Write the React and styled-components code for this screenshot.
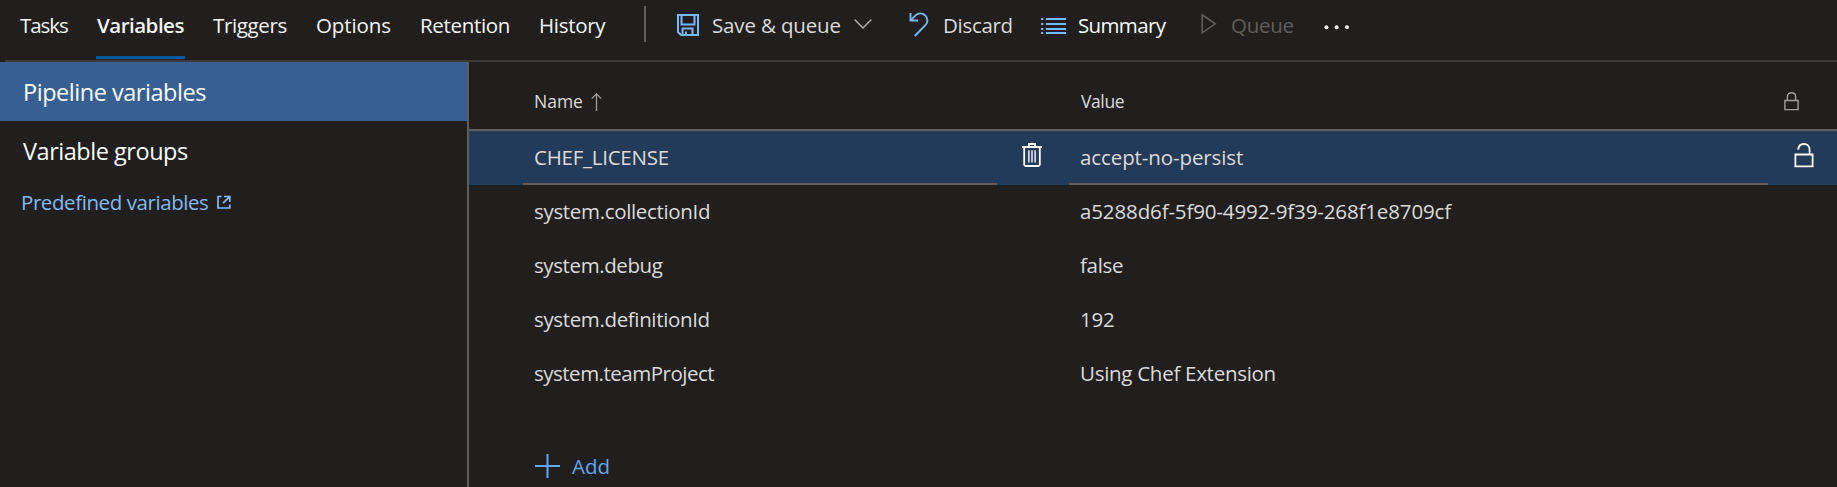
import React from "react";
import styled, { createGlobalStyle, css } from "styled-components";

const color = {
  bg: "#201f1e",
  divider: "#3b3a39",
  border: "#605e5c",
  selected: "#385f92",
  rowActive: "#233a58",
  text: "#dddbd9",
  bright: "#faf9f8",
  muted: "#605e5c",
  icon: "#79b8ff",
  link: "#82baf8",
  action: "#62a7fb",
};

const GlobalStyle = createGlobalStyle`
  *, *::before, *::after { box-sizing: border-box; }
  body {
    margin: 0;
    background: ${color.bg};
    color: ${color.text};
    font-family: "Open Sans", "Noto Sans", sans-serif;
    font-size: 20.5px;
    overflow: hidden;
  }
  svg { display: block; flex: none; }
`;

const Page = styled.div`
  display: flex;
  flex-direction: column;
  width: 100%;
  height: 487px;
  overflow: hidden;
`;

const Toolbar = styled.header`
  display: flex;
  flex: none;
  align-items: flex-start;
  height: 62px;
  margin-left: 5px;
  padding-left: 15px;
  border-bottom: 2px solid ${color.divider};
`;

const Label = styled.span`
  white-space: nowrap;
  letter-spacing: ${(p) => p.$track || 0}px;
`;

const TabList = styled.nav`
  display: flex;
  gap: 28px;
`;

const Tab = styled.div`
  width: ${(p) => p.$width}px;
  height: 59px;
  padding-left: ${(p) => p.$pad || 0}px;
  line-height: 50px;
  color: ${color.bright};
  border-bottom: 3px solid transparent;
  ${(p) =>
    p.$active &&
    css`
      font-weight: 600;
      border-color: #005a9e;
    `}
`;

const Separator = styled.div`
  width: 2px;
  height: 36px;
  margin: 6px 31px 0 38px;
  background: ${color.border};
`;

const Command = styled.div`
  display: flex;
  align-items: center;
  height: 50px;
  width: ${(p) => p.$width}px;
  gap: ${(p) => p.$gap}px;
  color: ${(p) => p.$color || color.text};
`;

const Body = styled.div`
  display: flex;
  flex: 1;
  min-height: 0;
`;

const Sidebar = styled.aside`
  width: 469px;
  flex: none;
  border-right: 2px solid ${color.border};
`;

const SideItem = styled.div`
  height: 59px;
  padding-left: 23px;
  line-height: 60px;
  font-size: 23.5px;
  color: #fff;
  background: ${(p) => (p.$active ? color.selected : "transparent")};
`;

const SideLink = styled.a`
  display: flex;
  align-items: center;
  gap: 9px;
  height: 44px;
  padding-left: 21px;
  color: ${color.link};
`;

const Main = styled.main`
  flex: 1;
  min-width: 0;
`;

const grid = css`
  display: grid;
  grid-template-columns: 474px 72px 699px 1fr;
  padding-left: 54px;
`;

const HeadRow = styled.div`
  ${grid}
  height: 69px;
  padding-top: 12px;
  font-size: 17.5px;
  line-height: 55px;
  border-bottom: 2px solid ${color.border};
`;

const Row = styled.div`
  ${grid}
  height: 54px;
  background: ${(p) => (p.$active ? color.rowActive : "transparent")};
`;

const Cell = styled.div`
  padding-left: 11px;
  line-height: 52px;
  border-bottom: 2px solid ${(p) => (p.$active ? color.border : "transparent")};
`;

const HeadCell = styled.div`
  display: flex;
  padding-left: ${(p) => p.$pad}px;
`;

const IconCell = styled.div`
  padding: ${(p) => p.$top}px 0 0 ${(p) => p.$left}px;
`;

const SortIcon = styled.div`
  padding: 19px 0 0 8px;
`;

const AddButton = styled.div`
  display: flex;
  align-items: center;
  gap: 12px;
  height: 54px;
  margin: 38px 0 0 66px;
  color: ${color.action};
`;

const SaveIcon = () => (
  <svg width="22" height="22" viewBox="0 0 22 22" fill="none" stroke={color.icon} strokeWidth="2">
    <path d="M1 1H21V21H4L1 18Z" />
    <path d="M4.5 1V10.5H17.5V1" />
    <path d="M5.5 21V14.5H15.5V21M9 21V17.5" />
  </svg>
);

const ChevronIcon = () => (
  <svg width="18" height="18" viewBox="0 0 18 18" fill="none" stroke="#b3afab" strokeWidth="1.4">
    <path d="M.6 3.5L9 12L17.4 3.5" />
  </svg>
);

const UndoIcon = () => (
  <svg width="20" height="26" viewBox="0 0 20 26" fill="none" stroke={color.icon} strokeWidth="1.9">
    <path d="M1.5 1V8.5H9" />
    <path d="M1.8 8.2L6.5 3.4C9.5 .8 13.5 .8 16.2 3.4C19.2 6.4 19.2 10.4 16.2 13.4L5.8 24" />
  </svg>
);

const ListIcon = () => (
  <svg width="25" height="18" viewBox="0 0 25 18" stroke={color.icon} strokeWidth="2">
    <path d="M0 3H2.3M0 8H2.3M0 13H2.3M0 17H2.3M5 3H25M5 8H25M5 13H25M5 17H25" />
  </svg>
);

const PlayIcon = () => (
  <svg width="16" height="24" viewBox="0 0 16 24" fill="none" stroke={color.muted} strokeWidth="1.6">
    <path d="M1.2 1.8V19.8L14.2 10.8Z" />
  </svg>
);

const DotsIcon = () => (
  <svg width="27" height="10" viewBox="0 0 27 10" fill={color.bright}>
    <circle cx="2.4" cy="7.3" r="2" />
    <circle cx="12.6" cy="7.3" r="2" />
    <circle cx="22.9" cy="7.3" r="2" />
  </svg>
);

const ExternalIcon = () => (
  <svg width="14" height="14" viewBox="0 0 14 14" fill="none" stroke={color.link} strokeWidth="1.7">
    <path d="M4.5 1.5H1V13H12.8V9.5" />
    <path d="M7 1.5H12.8V7M12.6 1.7L6 8.2" />
  </svg>
);

const ArrowUpIcon = () => (
  <svg width="11" height="18" viewBox="0 0 11 18" fill="none" stroke="#a19f9d" strokeWidth="1.3">
    <path d="M5.5 18V1M.8 5.6L5.5 .9L10.2 5.6" />
  </svg>
);

const LockIcon = () => (
  <svg width="15" height="19" viewBox="0 0 15 19" fill="none" stroke="#a19f9d" strokeWidth="1.4">
    <path d="M.9 8.5H14.1V17.6H.9Z" />
    <path d="M3.4 8.5V4.6C3.4 2.2 5.1 .8 7.5 .8S11.6 2.2 11.6 4.6V8.5" />
  </svg>
);

const UnlockIcon = () => (
  <svg width="20" height="25" viewBox="0 0 20 25" fill="none" stroke="#fff" strokeWidth="1.8">
    <path d="M1.4 11.5H18.6V23.4H1.4Z" />
    <path d="M4.2 6.6C4.4 3.2 6.8 1 10 1C13.4 1 15.6 3.4 15.6 6.6V11.5" />
  </svg>
);

const TrashIcon = () => (
  <svg width="20" height="24" viewBox="0 0 20 24" fill="none" stroke="#fff" strokeWidth="1.8">
    <path d="M0 4H20M7 4V1H13V4" />
    <path d="M2.2 4V21.5Q2.2 23 3.7 23H16.3Q17.8 23 17.8 21.5V4" />
    <path d="M6.9 7.2V19.6M10 7.2V19.6M13.1 7.2V19.6" strokeWidth="1.4" />
  </svg>
);

const PlusIcon = () => (
  <svg width="25" height="24" viewBox="0 0 25 24" stroke={color.action} strokeWidth="2">
    <path d="M0 12H25M12.5 0V24" />
  </svg>
);

const tabs = [
  { text: "Tasks", width: 48, track: -1.04 },
  { text: "Variables", width: 89, pad: 1, track: -0.5, active: true },
  { text: "Triggers", width: 74, track: -0.37 },
  { text: "Options", width: 76, pad: 1, track: -0.1 },
  { text: "Retention", width: 91, pad: 1, track: -0.32 },
  { text: "History", width: 68, pad: 1, track: -0.3 },
];

const variables = [
  { name: "CHEF_LICENSE", nameTrack: -0.25, value: "accept-no-persist", valueTrack: -0.1, active: true },
  { name: "system.collectionId", nameTrack: -0.33, value: "a5288d6f-5f90-4992-9f39-268f1e8709cf", valueTrack: -0.13 },
  { name: "system.debug", nameTrack: -0.4, value: "false", valueTrack: -0.3 },
  { name: "system.definitionId", nameTrack: -0.36, value: "192", valueTrack: -0.2 },
  { name: "system.teamProject", nameTrack: -0.5, value: "Using Chef Extension", valueTrack: -0.28 },
];

export default function App() {
  return (
    <Page>
      <GlobalStyle />
      <Toolbar>
        <TabList>
          {tabs.map((t) => (
            <Tab key={t.text} $width={t.width} $pad={t.pad} $active={t.active}>
              <Label $track={t.track}>{t.text}</Label>
            </Tab>
          ))}
        </TabList>
        <Separator />
        <Command $width={232} $gap={13}>
          <SaveIcon />
          <Label $track={-0.15}>Save &amp; queue</Label>
          <ChevronIcon />
        </Command>
        <Command $width={132} $gap={14}>
          <UndoIcon />
          <Label $track={-0.3}>Discard</Label>
        </Command>
        <Command $width={160} $gap={12} $color="#fff">
          <ListIcon />
          <Label $track={-0.65}>Summary</Label>
        </Command>
        <Command $width={123} $gap={14} $color={color.muted}>
          <PlayIcon />
          <Label $track={-0.3}>Queue</Label>
        </Command>
        <Command $width={27} $gap={0}>
          <DotsIcon />
        </Command>
      </Toolbar>
      <Body>
        <Sidebar>
          <SideItem $active>
            <Label $track={-0.47}>Pipeline variables</Label>
          </SideItem>
          <SideItem>
            <Label $track={-0.47}>Variable groups</Label>
          </SideItem>
          <SideLink>
            <Label $track={-0.42}>Predefined variables</Label>
            <ExternalIcon />
          </SideLink>
        </Sidebar>
        <Main>
          <HeadRow>
            <HeadCell $pad={11}>
              <Label>Name</Label>
              <SortIcon>
                <ArrowUpIcon />
              </SortIcon>
            </HeadCell>
            <div />
            <HeadCell $pad={12}>
              <Label $track={-0.4}>Value</Label>
            </HeadCell>
            <IconCell $top={18} $left={16}>
              <LockIcon />
            </IconCell>
          </HeadRow>
          {variables.map((v) => (
            <Row key={v.name} $active={v.active}>
              <Cell $active={v.active}>
                <Label $track={v.nameTrack}>{v.name}</Label>
              </Cell>
              <IconCell $top={12} $left={25}>
                {v.active && <TrashIcon />}
              </IconCell>
              <Cell $active={v.active}>
                <Label $track={v.valueTrack}>{v.value}</Label>
              </Cell>
              <IconCell $top={12} $left={26}>
                {v.active && <UnlockIcon />}
              </IconCell>
            </Row>
          ))}
          <AddButton>
            <PlusIcon />
            <Label>Add</Label>
          </AddButton>
        </Main>
      </Body>
    </Page>
  );
}
